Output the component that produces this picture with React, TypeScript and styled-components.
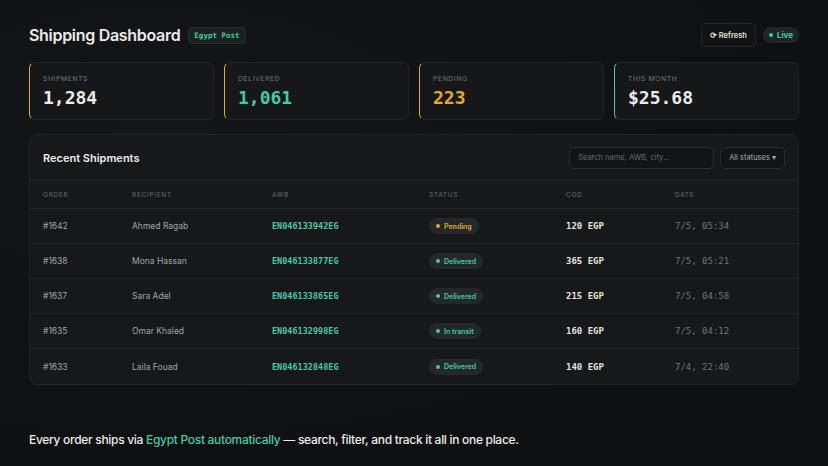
import styled, { createGlobalStyle } from 'styled-components';

const teal = '#45c9a5';
const amber = '#e3a92b';
const mono = '"DejaVu Sans Mono", "Liberation Mono", monospace';

const GlobalStyle = createGlobalStyle`
  html, body {
    margin: 0;
    padding: 0;
    background: #0f1012;
  }
  body {
    font-family: Inter, "Noto Sans", sans-serif;
    color: #e9e7e3;
  }
`;

type Stat = { label: string; value: string; color: string; accent: string };

const stats: Stat[] = [
  { label: 'Shipments', value: '1,284', color: '#ecebe7', accent: amber },
  { label: 'Delivered', value: '1,061', color: teal, accent: amber },
  { label: 'Pending', value: '223', color: amber, accent: amber },
  { label: 'This month', value: '$25.68', color: '#ecebe7', accent: teal },
];

type Row = {
  order: string;
  name: string;
  awb: string;
  status: 'Pending' | 'Delivered' | 'In transit';
  cod: string;
  date: string;
};

const rows: Row[] = [
  { order: '#1642', name: 'Ahmed Ragab', awb: 'EN046133942EG', status: 'Pending', cod: '120 EGP', date: '7/5, 05:34' },
  { order: '#1638', name: 'Mona Hassan', awb: 'EN046133877EG', status: 'Delivered', cod: '365 EGP', date: '7/5, 05:21' },
  { order: '#1637', name: 'Sara Adel', awb: 'EN046133865EG', status: 'Delivered', cod: '215 EGP', date: '7/5, 04:58' },
  { order: '#1635', name: 'Omar Khaled', awb: 'EN046132998EG', status: 'In transit', cod: '160 EGP', date: '7/5, 04:12' },
  { order: '#1633', name: 'Laila Fouad', awb: 'EN046132848EG', status: 'Delivered', cod: '140 EGP', date: '7/4, 22:40' },
];

export default function App() {
  return (
    <Page>
      <GlobalStyle />
      <Header>
        <TitleGroup>
          <Title>Shipping Dashboard</Title>
          <Badge>Egypt Post</Badge>
        </TitleGroup>
        <Actions>
          <RefreshButton>⟳ Refresh</RefreshButton>
          <LivePill>
            <Dot $color={teal} />
            Live
          </LivePill>
        </Actions>
      </Header>

      <StatGrid>
        {stats.map((s) => (
          <StatCard key={s.label} $accent={s.accent}>
            <StatLabel>{s.label}</StatLabel>
            <StatValue $color={s.color}>{s.value}</StatValue>
          </StatCard>
        ))}
      </StatGrid>

      <Panel>
        <PanelHead>
          <PanelTitle>Recent Shipments</PanelTitle>
          <Controls>
            <Search placeholder="Search name, AWB, city..." />
            <Select>All statuses ▾</Select>
          </Controls>
        </PanelHead>
        <HeadRow>
          <span>Order</span>
          <span>Recipient</span>
          <span>AWB</span>
          <span>Status</span>
          <span>COD</span>
          <span>Date</span>
        </HeadRow>
        {rows.map((r) => (
          <BodyRow key={r.order}>
            <Order>{r.order}</Order>
            <Name>{r.name}</Name>
            <Awb>{r.awb}</Awb>
            <Cell>
              <StatusPill $color={r.status === 'Pending' ? amber : teal}>
                <Dot $color={r.status === 'Pending' ? amber : teal} />
                {r.status}
              </StatusPill>
            </Cell>
            <Cod>{r.cod}</Cod>
            <DateCell>{r.date}</DateCell>
          </BodyRow>
        ))}
      </Panel>

      <Footer>
        Every order ships via <Highlight>Egypt Post automatically</Highlight> — search, filter, and track it all in one place.
      </Footer>
    </Page>
  );
}

const Page = styled.div`
  width: 828px;
  height: 466px;
  box-sizing: border-box;
  padding: 22px 29px 0;
  background: radial-gradient(ellipse at 20% 30%, #151618 0%, #0f1012 70%);
  overflow: hidden;
`;

const Header = styled.div`
  display: flex;
  align-items: center;
  justify-content: space-between;
  height: 26px;
`;

const TitleGroup = styled.div`
  display: flex;
  align-items: center;
  gap: 8px;
`;

const Title = styled.h1`
  margin: 0;
  font-size: 16px;
  font-weight: 600;
  letter-spacing: -0.3px;
  color: #ecebe7;
`;

const Badge = styled.span`
  font-family: ${mono};
  font-size: 7.5px;
  font-weight: 700;
  color: ${teal};
  background: #1b2321;
  border: 1px solid #243029;
  border-radius: 4px;
  padding: 3px 5px;
`;

const Actions = styled.div`
  display: flex;
  align-items: center;
  gap: 7px;
`;

const RefreshButton = styled.button`
  height: 24px;
  padding: 0 8px;
  background: #121315;
  border: 1px solid #222327;
  border-radius: 5px;
  color: #e4e2de;
  font-family: Inter, sans-serif;
  font-size: 7.5px;
  font-weight: 600;
`;

const LivePill = styled.span`
  display: inline-flex;
  align-items: center;
  gap: 4px;
  height: 16px;
  padding: 0 6px;
  border-radius: 8px;
  background: #1e2624;
  color: ${teal};
  font-size: 8px;
  font-weight: 700;
`;

const Dot = styled.span<{ $color: string }>`
  width: 4px;
  height: 4px;
  border-radius: 50%;
  background: ${(p) => p.$color};
`;

const StatGrid = styled.div`
  display: grid;
  grid-template-columns: repeat(4, 1fr);
  gap: 10px;
  margin-top: 14px;
`;

const StatCard = styled.div<{ $accent: string }>`
  height: 58px;
  box-sizing: border-box;
  padding: 11px 13px;
  background: #161719;
  border: 1px solid #222327;
  border-left: 1.5px solid ${(p) => p.$accent};
  border-radius: 6px;
`;

const StatLabel = styled.div`
  font-size: 6.8px;
  letter-spacing: 0.6px;
  text-transform: uppercase;
  color: #75777b;
`;

const StatValue = styled.div<{ $color: string }>`
  margin-top: 4px;
  font-family: ${mono};
  font-size: 18px;
  font-weight: 700;
  color: ${(p) => p.$color};
`;

const Panel = styled.div`
  margin-top: 14px;
  background: #17181a;
  border: 1px solid #222326;
  border-radius: 8px;
  overflow: hidden;
`;

const PanelHead = styled.div`
  display: flex;
  align-items: center;
  justify-content: space-between;
  height: 46px;
  box-sizing: border-box;
  padding: 0 13px;
  border-bottom: 1px solid #222326;
`;

const PanelTitle = styled.div`
  font-size: 11px;
  font-weight: 600;
  color: #ecebe7;
`;

const Controls = styled.div`
  display: flex;
  gap: 6px;
`;

const Search = styled.input`
  width: 145px;
  height: 22px;
  box-sizing: border-box;
  padding: 0 8px;
  background: #131416;
  border: 1px solid #2a2b2f;
  border-radius: 5px;
  color: #ddd;
  font-family: Inter, sans-serif;
  font-size: 7.5px;
  outline: none;
  &::placeholder {
    color: #686a6e;
  }
`;

const Select = styled.div`
  display: flex;
  align-items: center;
  height: 22px;
  box-sizing: border-box;
  padding: 0 8px;
  background: #131416;
  border: 1px solid #2a2b2f;
  border-radius: 5px;
  color: #a9aaac;
  font-size: 7.5px;
`;

const gridCols = '89px 140px 157px 137px 109px 1fr';

const HeadRow = styled.div`
  display: grid;
  grid-template-columns: ${gridCols};
  align-items: center;
  height: 28px;
  box-sizing: border-box;
  padding: 0 13px;
  border-bottom: 1px solid #222326;
  font-size: 6.5px;
  letter-spacing: 0.7px;
  text-transform: uppercase;
  color: #6a6c70;
`;

const BodyRow = styled.div`
  display: grid;
  grid-template-columns: ${gridCols};
  align-items: center;
  height: 35px;
  box-sizing: border-box;
  padding: 0 13px;
  border-bottom: 1px solid #1f2023;
  &:last-child {
    border-bottom: none;
  }
`;

const Cell = styled.span`
  display: flex;
  align-items: center;
`;

const Order = styled.span`
  font-size: 8.5px;
  color: #a3a4a6;
`;

const Name = styled.span`
  font-size: 8.5px;
  color: #a3a4a6;
`;

const Awb = styled.span`
  font-family: ${mono};
  font-size: 8.5px;
  font-weight: 700;
  color: ${teal};
`;

const StatusPill = styled.span<{ $color: string }>`
  display: inline-flex;
  align-items: center;
  gap: 4px;
  height: 16px;
  padding: 0 7px;
  border-radius: 8px;
  background: #24282a;
  color: ${(p) => p.$color};
  font-size: 7px;
  font-weight: 600;
`;

const Cod = styled.span`
  font-family: ${mono};
  font-size: 9px;
  font-weight: 700;
  color: #e4e2de;
`;

const DateCell = styled.span`
  font-family: ${mono};
  font-size: 9px;
  color: #727477;
`;

const Footer = styled.p`
  margin: 47px 0 0;
  font-size: 12px;
  font-weight: 500;
  color: #ecebe7;
  letter-spacing: -0.3px;
`;

const Highlight = styled.span`
  color: ${teal};
`;
